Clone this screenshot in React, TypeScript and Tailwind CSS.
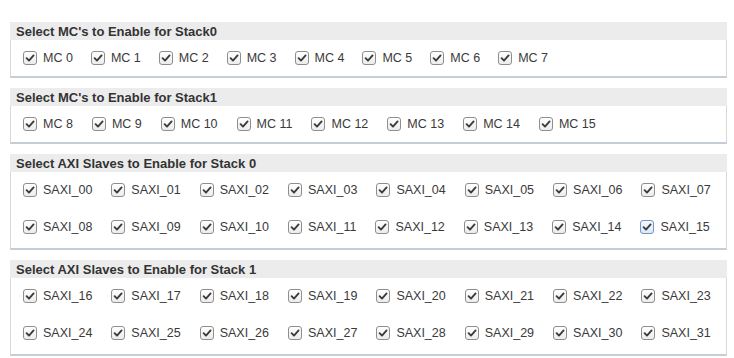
import React from "react";

type Item = { label: string; focused?: boolean };

function CheckBox({ focused }: { focused?: boolean }) {
  return (
    <span
      className={
        focused
          ? "flex h-[14px] w-[14px] shrink-0 items-center justify-center rounded-[3px] border border-[#6f93cc] bg-gradient-to-b from-[#f4f8ff] to-[#dde8f7]"
          : "flex h-[14px] w-[14px] shrink-0 items-center justify-center rounded-[3px] border border-[#8e8e8e] bg-gradient-to-b from-white to-[#ececec]"
      }
    >
      <svg width="10" height="10" viewBox="0 0 10 10">
        <path
          d="M1.6 5.2 L4 7.6 L8.6 2.4"
          fill="none"
          stroke="#3c3c3c"
          strokeWidth="1.9"
          strokeLinecap="round"
          strokeLinejoin="round"
        />
      </svg>
    </span>
  );
}

function Option({ item }: { item: Item }) {
  return (
    <label className="flex items-center gap-[6px]">
      <CheckBox focused={item.focused} />
      <span className="whitespace-nowrap text-[12.5px] leading-[14px] text-[#3a3a3a]">
        {item.label}
      </span>
    </label>
  );
}

function Panel({
  title,
  rows,
  gap,
}: {
  title: string;
  rows: Item[][];
  gap: string;
}) {
  // panels with two rows get a little more room at the bottom
  const body =
    rows.length > 1
      ? "flex flex-col gap-[23px] border-x border-b-2 border-x-[#d8d8d8] border-b-[#c4cdd9] bg-white pb-[14px] pl-[12px] pt-[11px]"
      : "flex flex-col gap-[23px] border-x border-b-2 border-x-[#d8d8d8] border-b-[#c4cdd9] bg-white pb-[11px] pl-[12px] pt-[11px]";
  return (
    <section>
      <div className="flex h-[18px] items-center bg-[#ececec] px-[6px] text-[13px] font-bold leading-none text-[#333]">
        {title}
      </div>
      <div className={body}>
        {rows.map((row, i) => (
          <div key={i} className={"flex " + gap}>
            {row.map((item) => (
              <Option key={item.label} item={item} />
            ))}
          </div>
        ))}
      </div>
    </section>
  );
}

const range = (from: number, to: number) =>
  Array.from({ length: to - from + 1 }, (_, i) => from + i);

const mc = (from: number, to: number): Item[] =>
  range(from, to).map((n) => ({ label: `MC ${n}` }));

const saxi = (from: number, to: number): Item[] =>
  range(from, to).map((n) => ({
    label: `SAXI_${String(n).padStart(2, "0")}`,
    focused: n === 15,
  }));

export default function App() {
  return (
    <div
      className="min-h-[358px] w-[734px] bg-white pl-[10px] pr-[7px] pt-[22px]"
      style={{ fontFamily: '"Liberation Sans", Arial, sans-serif' }}
    >
      <div className="flex flex-col gap-[10px]">
        <Panel title="Select MC's to Enable for Stack0" rows={[mc(0, 7)]} gap="gap-x-[18px]" />
        <Panel title="Select MC's to Enable for Stack1" rows={[mc(8, 15)]} gap="gap-x-[19px]" />
        <Panel
          title="Select AXI Slaves to Enable for Stack 0"
          rows={[saxi(0, 7), saxi(8, 15)]}
          gap="gap-x-[19px]"
        />
        <Panel
          title="Select AXI Slaves to Enable for Stack 1"
          rows={[saxi(16, 23), saxi(24, 31)]}
          gap="gap-x-[19px]"
        />
      </div>
    </div>
  );
}
